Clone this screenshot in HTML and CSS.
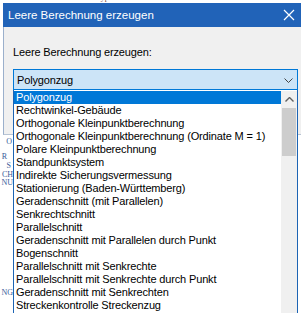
FILE: index.html
```html
<!DOCTYPE html>
<html lang="de">
<head>
  <meta charset="UTF-8">
  <title>Leere Berechnung erzeugen</title>
  <link rel="stylesheet" href="styles.css">
</head>
<body>

<div class="backdrop">
  <div class="bg-top">
    <span class="c1">Nummer</span><span class="c2">Typ</span><span class="c3">Datum</span><span class="c4">Erstellt</span><span class="c5">A</span>
  </div>
  <div class="bg-col">
    <div class="l1">O</div>
    <div class="l2">R</div>
    <div class="l3">S</div>
    <div class="l4">CH</div>
    <div class="l5">NU</div>
    <div class="l6">NG</div>
  </div>
</div>

<div class="dialog">
  <div class="titlebar">
    <span class="title">Leere Berechnung erzeugen</span>
    <svg class="close" width="12" height="12" viewBox="0 0 12 12">
      <path d="M1 1 L11 11 M11 1 L1 11" stroke="#fff" stroke-width="1.2" fill="none"/>
    </svg>
  </div>
  <div class="dialog-body">
    <div class="label">Leere Berechnung erzeugen:</div>
    <div class="combo">
      <span>Polygonzug</span>
      <svg class="chevron" width="9" height="5" viewBox="0 0 9 5">
        <path d="M0.5 0.5 L4.5 4.5 L8.5 0.5" stroke="#444" stroke-width="1" fill="none"/>
      </svg>
    </div>
  </div>
</div>

<div class="droplist">
  <ul class="items">
    <li class="selected">Polygonzug</li>
    <li>Rechtwinkel-Gebäude</li>
    <li>Orthogonale Kleinpunktberechnung</li>
    <li>Orthogonale Kleinpunktberechnung (Ordinate M = 1)</li>
    <li>Polare Kleinpunktberechnung</li>
    <li>Standpunktsystem</li>
    <li>Indirekte Sicherungsvermessung</li>
    <li>Stationierung (Baden-Württemberg)</li>
    <li>Geradenschnitt (mit Parallelen)</li>
    <li>Senkrechtschnitt</li>
    <li>Parallelschnitt</li>
    <li>Geradenschnitt mit Parallelen durch Punkt</li>
    <li>Bogenschnitt</li>
    <li>Parallelschnitt mit Senkrechte</li>
    <li>Parallelschnitt mit Senkrechte durch Punkt</li>
    <li>Geradenschnitt mit Senkrechten</li>
    <li>Streckenkontrolle Streckenzug</li>
  </ul>
  <div class="scrollbar">
    <div class="sb-up">
      <svg width="9" height="5" viewBox="0 0 9 5">
        <path d="M0.5 4.5 L4.5 0.5 L8.5 4.5" stroke="#606060" stroke-width="1.4" fill="none"/>
      </svg>
    </div>
    <div class="sb-thumb"></div>
  </div>
</div>

</body>
</html>
```

FILE: styles.css
```css
body {
  margin: 0;
  width: 301px;
  height: 313px;
  overflow: hidden;
  background: #fff;
  position: relative;
  font-family: "Liberation Sans", Arial, sans-serif;
}

/* application behind the dialog */
.backdrop {
  font-family: "Liberation Serif", serif;
  font-size: 8px;
  color: #3a5c9a;
}
.bg-top {
  display: flex;
  margin-top: -7px;
  height: 10px;
  line-height: 10px;
  color: #7a4a3a;
}
.bg-top .c1 { margin-left: 28px; }
.bg-top .c2 { margin-left: 40px; }
.bg-top .c3 { margin-left: 30px; }
.bg-top .c4 { margin-left: 22px; }
.bg-top .c5 { margin-left: 50px; }
.bg-col {
  width: 13px;
  text-align: right;
  line-height: 8px;
  margin-top: 135px;
}
.bg-col .l1 { padding-right: 1px; }
.bg-col .l2 { margin-top: 7px; padding-right: 6px; }
.bg-col .l3 { margin-top: 1px; padding-right: 2px; }
.bg-col .l4 { margin-top: 1px; }
.bg-col .l6 { margin-top: 102px; }

/* dialog window */
.dialog {
  position: absolute;
  left: 3px;
  top: 3px;
  width: 320px;
}
.titlebar {
  height: 24px;
  background: #2163b8;
  color: #fff;
  display: flex;
  align-items: center;
  padding-left: 5px;
  font-size: 11.5px;
}
.title {
  flex: 1;
}
.close {
  margin-right: 28px;
}
.dialog-body {
  height: 108px;
  background: #f0f0f0;
  border-left: 1px solid #9bb0cc;
  border-bottom: 1px solid #b8c4d4;
  padding: 19px 0 0 9px;
  box-sizing: border-box;
}
.label {
  font-size: 11px;
  letter-spacing: -0.15px;
  color: #000;
  height: 13px;
  line-height: 13px;
}
.combo {
  margin-top: 10px;
  width: 285px;
  height: 21px;
  box-sizing: border-box;
  border: 1px solid #0078d7;
  background: #cce4f7;
  display: flex;
  align-items: center;
  padding: 0 4px 0 3px;
  font-size: 11px;
  letter-spacing: -0.15px;
}
.combo span {
  flex: 1;
}
.chevron {
  margin-top: 1px;
}

/* dropdown popup */
.droplist {
  position: absolute;
  left: 13px;
  top: 90px;
  width: 285px;
  height: 240px;
  box-sizing: border-box;
  border-left: 1px solid #1c64b4;
  border-right: 1px solid #1c64b4;
  padding-top: 1px;
  background: #fff;
  display: flex;
}
.items {
  list-style: none;
  margin: 0;
  padding: 0;
  flex: 1;
}
.items li {
  height: 13px;
  line-height: 13px;
  padding-left: 2px;
  font-size: 11px;
  letter-spacing: -0.15px;
  color: #000;
  white-space: nowrap;
}
.items li.selected {
  background: #0078d7;
  color: #fff;
}
.scrollbar {
  width: 16px;
  background: #f0f0f0;
}
.sb-up {
  height: 17px;
  display: flex;
  align-items: center;
  justify-content: center;
}
.sb-thumb {
  height: 48px;
  margin: 0 1px;
  background: #cdcdcd;
}
```
